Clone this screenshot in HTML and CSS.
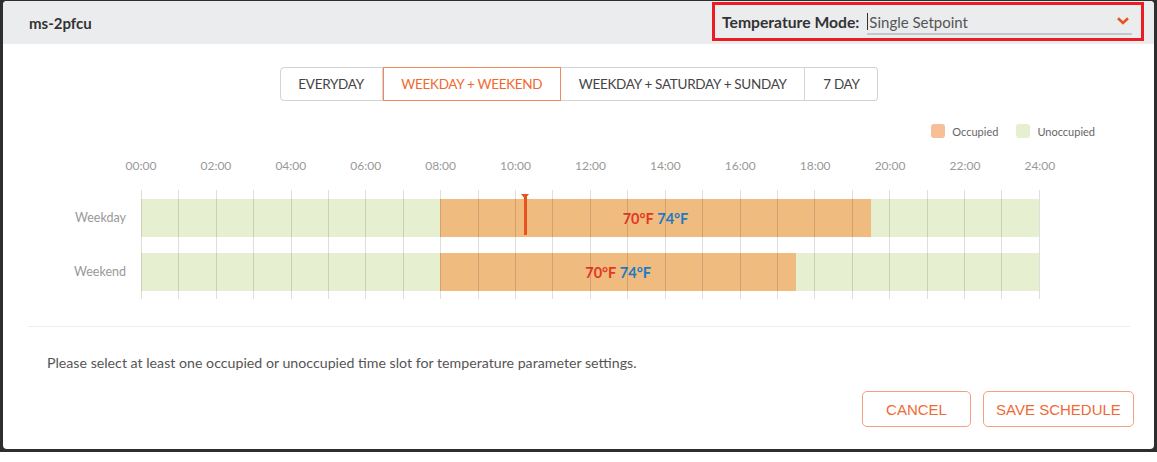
FILE: index.html
```html
<!DOCTYPE html>
<html lang="en">
<head>
    <meta charset="UTF-8">
    <title>Schedule</title>
    <link rel="stylesheet" href="styles.css">
</head>
<body>
    <div class="frame">
        <div class="modal">

            <!-- Header -->
            <div class="modal-header">
                <span class="device-name">ms-2pfcu</span>
                <div class="mode-box">
                    <label class="mode-label">Temperature Mode:</label>
                    <div class="mode-select">
                        <span class="caret"></span>Single Setpoint
                        <svg class="chevron" width="12" height="8" viewBox="0 0 12 8">
                            <path d="M1 1.2 L6 6 L11 1.2" fill="none" stroke="#e8561e" stroke-width="2.6"/>
                        </svg>
                    </div>
                </div>
            </div>

            <div class="modal-body">
                <!-- Schedule type -->
                <div class="tabs">
                    <button class="tab">EVERYDAY</button>
                    <button class="tab active">WEEKDAY + WEEKEND</button>
                    <button class="tab">WEEKDAY + SATURDAY + SUNDAY</button>
                    <button class="tab">7 DAY</button>
                </div>

                <div class="legend">
                    <span class="swatch occupied"></span>Occupied
                    <span class="swatch unoccupied"></span>Unoccupied
                </div>

                <!-- Chart -->
                <div class="hours">
                    <span>00:00</span><span>02:00</span><span>04:00</span><span>06:00</span>
                    <span>08:00</span><span>10:00</span><span>12:00</span><span>14:00</span>
                    <span>16:00</span><span>18:00</span><span>20:00</span><span>22:00</span>
                    <span>24:00</span>
                </div>

                <div class="chart">
                    <div class="row-labels">
                        <div class="row-label">Weekday</div>
                        <div class="row-label">Weekend</div>
                    </div>
                    <div class="track">
                        <div class="bar">
                            <div class="seg free" style="width: 33.333%"></div>
                            <div class="seg busy" style="width: 47.917%">
                                <span class="heat">70°F</span>&nbsp;<span class="cool">74°F</span>
                            </div>
                            <div class="seg free" style="flex: 1"></div>
                            <div class="marker" style="left: 42.708%"></div>
                        </div>
                        <div class="bar">
                            <div class="seg free" style="width: 33.333%"></div>
                            <div class="seg busy" style="width: 39.583%">
                                <span class="heat">70°F</span>&nbsp;<span class="cool">74°F</span>
                            </div>
                            <div class="seg free" style="flex: 1"></div>
                        </div>
                        <div class="grid-lines" id="gridLines"></div>
                    </div>
                </div>

                <div class="divider"></div>

                <p class="hint">Please select at least one occupied or unoccupied time slot for temperature parameter settings.</p>

                <div class="actions">
                    <button class="btn">CANCEL</button>
                    <button class="btn">SAVE SCHEDULE</button>
                </div>
            </div>
        </div>
    </div>

    <script>
        // hour lines, 0..24
        var grid = document.getElementById('gridLines');
        for (var i = 0; i <= 24; i++) {
            var line = document.createElement('span');
            grid.appendChild(line);
        }
    </script>
</body>
</html>
```

FILE: styles.css
```css
body {
    margin: 0;
    background: #fff;
    font-family: 'Lato', 'Noto Sans', sans-serif;
    color: #444;
}

.frame {
    background: #2e2e2e;
    padding: 1px 3px 3px 3px;
    height: 448px;
}

.modal {
    background: #fff;
    border-radius: 4px;
    height: 448px;
    overflow: hidden;
}

/* Header */
.modal-header {
    height: 43px;
    background: #ebecee;
    display: flex;
    align-items: center;
    justify-content: space-between;
    padding-left: 26px;
    padding-right: 10px;
}

.device-name {
    font-weight: bold;
    font-size: 15px;
    color: #333;
}

.mode-box {
    width: 419px;
    height: 33px;
    border: 3px solid #ec1c24;
    display: flex;
    align-items: center;
    padding-left: 7px;
    margin-top: -2px;
    box-sizing: content-box;
}

.mode-label {
    font-weight: bold;
    font-size: 15.7px;
    color: #333;
    margin-right: 8px;
}

.mode-select {
    position: relative;
    width: 265px;
    height: 22px;
    font-size: 15px;
    color: #555;
    border-bottom: 2px solid #c4c6c9;
    display: flex;
    align-items: center;
    margin-top: 2px;
}

.caret {
    width: 1px;
    height: 17px;
    background: #333;
    margin-right: 1px;
}

.chevron {
    position: absolute;
    right: 3px;
    top: 6px;
}

/* Body */
.modal-body {
    padding: 23px 24px 0 25px;
}

.tabs {
    display: flex;
    justify-content: center;
}

.tab {
    font-family: 'Lato', sans-serif;
    font-size: 13.5px;
    color: #444;
    background: #fff;
    border: 1px solid #d3d3d3;
    border-left: none;
    height: 34px;
    padding: 0 17.75px;
    letter-spacing: -0.3px;
    cursor: pointer;
}

.tab:first-child {
    border-left: 1px solid #d3d3d3;
    border-radius: 4px 0 0 4px;
}

.tab:last-child {
    border-radius: 0 4px 4px 0;
}

.tab.active {
    color: #f06a30;
    border: 1px solid #f08a5d;
}

.legend {
    display: flex;
    justify-content: flex-end;
    align-items: center;
    font-size: 11px;
    color: #666;
    margin-top: 23px;
    margin-right: 35px;
    height: 14px;
}

.swatch {
    width: 14px;
    height: 14px;
    border-radius: 3px;
    margin-right: 7px;
}

.swatch.occupied {
    background: #f8be98;
}

.swatch.unoccupied {
    background: #e6f0d0;
    margin-left: 18px;
}

.hours {
    display: flex;
    justify-content: space-between;
    margin-left: 93px;
    width: 939px;
    margin-top: 20px;
    font-size: 12px;
    line-height: 16px;
    color: #999;
}

.hours span {
    width: 40px;
    text-align: center;
}

.chart {
    display: flex;
    margin-top: 16px;
}

.row-labels {
    width: 98px;
    padding-right: 15px;
    padding-top: 9px;
    display: flex;
    flex-direction: column;
    gap: 16px;
}

.row-label {
    height: 38px;
    line-height: 38px;
    text-align: right;
    font-size: 12.5px;
    color: #999;
}

.track {
    position: relative;
    width: 899px;
    padding: 9px 0 8px;
    display: flex;
    flex-direction: column;
    gap: 16px;
}

.bar {
    position: relative;
    display: flex;
    height: 38px;
    width: 898px;
}

.seg {
    height: 100%;
}

.seg.free {
    background: #e6f0d0;
}

.seg.busy {
    background: #f0bb7f;
    display: flex;
    align-items: center;
    justify-content: center;
    font-weight: bold;
    font-size: 14.5px;
}

.heat {
    color: #e0391f;
}

.cool {
    color: #1b7ac6;
}

.marker {
    position: absolute;
    top: -3px;
    width: 3px;
    height: 39px;
    margin-left: -1px;
    background: #e8531e;
}

.marker::before {
    content: '';
    position: absolute;
    top: -2px;
    left: -3px;
    border-left: 4.5px solid transparent;
    border-right: 4.5px solid transparent;
    border-top: 5px solid #e8531e;
}

.grid-lines {
    position: absolute;
    top: 0;
    left: 0;
    width: 899px;
    height: 100%;
    display: flex;
    justify-content: space-between;
    pointer-events: none;
}

.grid-lines span {
    width: 1px;
    height: 100%;
    background: rgba(0, 0, 0, 0.13);
}

.divider {
    height: 1px;
    background: #eeeeee;
    margin-top: 27px;
}

.hint {
    margin: 27px 0 0 19px;
    font-size: 14.2px;
    line-height: 18px;
    color: #555;
}

.actions {
    display: flex;
    justify-content: flex-end;
    gap: 12px;
    margin-top: 19px;
    margin-right: -4px;
}

.btn {
    font-family: 'Liberation Sans', Arial, sans-serif;
    font-size: 15px;
    color: #ee6a36;
    background: #fff;
    border: 1px solid #f4a07f;
    border-radius: 5px;
    height: 36px;
    padding: 0;
    white-space: nowrap;
    cursor: pointer;
}

.btn:first-child {
    width: 109px;
}

.btn:last-child {
    width: 151px;
}
```
